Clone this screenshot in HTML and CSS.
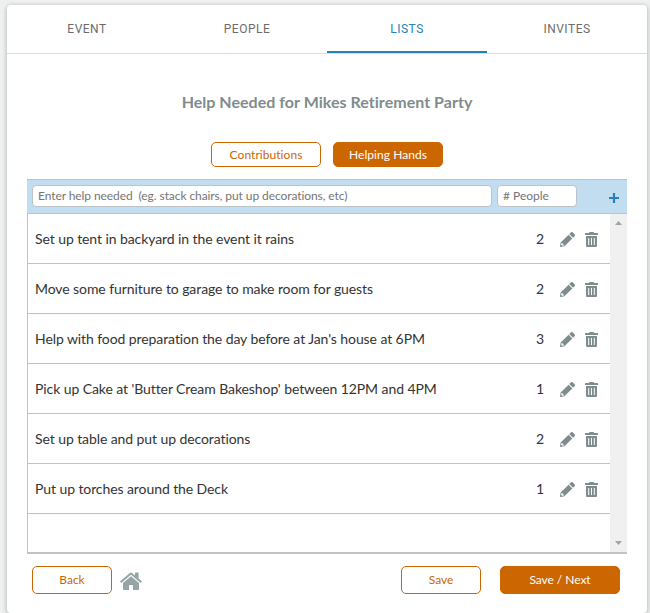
FILE: index.html
```html
<!DOCTYPE html>
<html lang="en">
<head>
<meta charset="utf-8">
<title>Help Needed</title>
<link rel="stylesheet" href="styles.css">
</head>
<body>
<svg class="sprite" aria-hidden="true">
  <symbol id="pencil" viewBox="0 0 512 512"><path d="M497.9 142.1l-46.1 46.1c-4.7 4.7-12.3 4.7-17 0l-111-111c-4.7-4.7-4.7-12.3 0-17l46.1-46.1c18.7-18.7 49.1-18.7 67.9 0l60.1 60.1c18.8 18.7 18.8 49.1 0 67.9zM284.2 99.8L21.6 362.4.4 483.9c-2.9 16.4 11.4 30.6 27.8 27.8l121.5-21.3 262.6-262.6c4.7-4.7 4.7-12.3 0-17l-111-111c-4.8-4.7-12.4-4.7-17.1 0zM88 424h48v36.3l-64.5 11.3-31.1-31.1L51.8 376H88v48z"/></symbol>
  <symbol id="trash" viewBox="0 0 13 15"><path fill-rule="evenodd" d="M0 1.4Q0 1 .4 1H4L4.5 0h4L9 1h3.6q.4 0 .4.4V3H0zM1 4h11v9.8q0 1.2-1.2 1.2H2.2Q1 15 1 13.8zM3.2 6v7h1V6zM6 6v7h1V6zM8.8 6v7h1V6z"/></symbol>
  <symbol id="home" viewBox="0 0 22 18"><path d="M11 4.3 3 11v6.2q0 .8.8.8H9v-4.5q0-.5.5-.5h3q.5 0 .5.5V18h5.2q.8 0 .8-.8V11z"/><path d="M.2 9.2 9.9.9q1.1-.9 2.2 0L15 3.4V1q0-.5.5-.5h2.6q.5 0 .5.5v5.4l3.2 2.8q.3.3.1.6l-.8.9q-.3.3-.7 0L11 2.8 1.6 10.7q-.4.3-.7 0l-.8-.9q-.2-.3.1-.6z"/></symbol>
</svg>
<main class="card">
  <nav class="tabs">
    <a class="tab">EVENT</a>
    <a class="tab">PEOPLE</a>
    <a class="tab active">LISTS</a>
    <a class="tab">INVITES</a>
  </nav>
  <h1 class="title">Help Needed for Mikes Retirement Party</h1>
  <div class="switch">
    <button class="btn">Contributions</button>
    <button class="btn solid">Helping Hands</button>
  </div>
  <section class="panel">
    <div class="entry">
      <input class="field help" placeholder="Enter help needed &nbsp;(eg. stack chairs, put up decorations, etc)">
      <input class="field count" placeholder="# People">
      <svg class="plus" viewBox="0 0 10 10"><path d="M3.9 0h2.200v3.900H10v2.200H6.100V10H3.900V6.100H0V3.900h3.900z"/></svg>
    </div>
    <div class="list">
      <ul class="rows">
        <li class="row"><span class="name">Set up tent in backyard in the event it rains</span><span class="num">2</span><svg class="pencil"><use href="#pencil"/></svg><svg class="trash"><use href="#trash"/></svg></li>
        <li class="row"><span class="name">Move some furniture to garage to make room for guests</span><span class="num">2</span><svg class="pencil"><use href="#pencil"/></svg><svg class="trash"><use href="#trash"/></svg></li>
        <li class="row"><span class="name">Help with food preparation the day before at Jan's house at 6PM</span><span class="num">3</span><svg class="pencil"><use href="#pencil"/></svg><svg class="trash"><use href="#trash"/></svg></li>
        <li class="row"><span class="name">Pick up Cake at 'Butter Cream Bakeshop' between 12PM and 4PM</span><span class="num">1</span><svg class="pencil"><use href="#pencil"/></svg><svg class="trash"><use href="#trash"/></svg></li>
        <li class="row"><span class="name">Set up table and put up decorations</span><span class="num">2</span><svg class="pencil"><use href="#pencil"/></svg><svg class="trash"><use href="#trash"/></svg></li>
        <li class="row"><span class="name">Put up torches around the Deck</span><span class="num">1</span><svg class="pencil"><use href="#pencil"/></svg><svg class="trash"><use href="#trash"/></svg></li>
      </ul>
      <div class="scrollbar">
        <svg class="arrow" viewBox="0 0 7 4"><path d="M3.5 0 7 4H0z"/></svg>
        <svg class="arrow" viewBox="0 0 7 4"><path d="M0 0h7L3.500 4z"/></svg>
      </div>
    </div>
  </section>
  <footer class="actions">
    <button class="btn small">Back</button>
    <svg class="home"><use href="#home"/></svg>
    <button class="btn small save">Save</button>
    <button class="btn solid next">Save / Next</button>
  </footer>
</main>
</body>
</html>
```
FILE: styles.css
```css
* { box-sizing: border-box; }
body {
  margin: 0;
  height: 613px;
  padding: 5px 3px 0 7px;
  overflow: hidden;
  background: #eff1f1;
  font-family: Lato, sans-serif;
}
.sprite { display: none; }
svg { display: block; flex: none; fill: #7f8c8d; }
.card {
  width: 640px;
  height: 608px;
  background: #fff;
  border-radius: 4px;
  box-shadow: 0 1px 5px rgba(0, 0, 0, .3);
}
.tabs {
  display: flex;
  height: 49px;
  border-bottom: 1px solid #dadddd;
}
.tab {
  flex: 1;
  height: 48px;
  text-align: center;
  font: 400 12px/48px Roboto, sans-serif;
  letter-spacing: .5px;
  color: #6c6c6c;
}
.tab.active { color: #2980b9; border-bottom: 2px solid #2980b9; }
.title {
  margin: 38px 0 0;
  font-size: 16px;
  line-height: 20px;
  font-weight: 700;
  letter-spacing: .03px;
  text-align: center;
  color: #7f8c8d;
}
.switch {
  display: flex;
  justify-content: center;
  gap: 12px;
  margin-top: 30px;
}
.btn {
  width: 110px;
  height: 25px;
  padding: 0;
  border: 1px solid #cc6600;
  border-radius: 5px;
  background: #fff;
  color: #cc6600;
  font: 400 12px/15px Lato, sans-serif;
  letter-spacing: .05px;
}
.btn.solid { background: #cc6600; color: #fff; }
.panel { width: 600px; margin: 12px 0 0 20px; }
.entry {
  display: flex;
  align-items: flex-start;
  height: 35px;
  padding: 5px 8px 0 5px;
  border: solid #bdc3c7;
  border-width: 1px 0;
  background: #c1ddef;
}
.field {
  height: 22px;
  padding: 0 5px 2px;
  border: 1px solid #bdc3c7;
  border-radius: 4px;
  background: #fff;
  font: 400 12px/16px Lato, sans-serif;
  letter-spacing: -.08px;
  color: #444;
}
.field::placeholder { color: #757575; opacity: 1; }
.help { width: 460px; margin-right: 5px; }
.count { width: 80px; letter-spacing: 0; }
.plus { width: 10px; height: 10px; margin: 8px 0 0 auto; fill: #2980b9; }
.list {
  display: flex;
  height: 340px;
  border-left: 1px solid #bdc3c7;
  border-bottom: 2px solid #bdc3c7;
}
.rows { flex: 1; margin: 0; padding: 0; list-style: none; }
.row {
  display: flex;
  align-items: center;
  height: 50px;
  padding: 1px 12px 0 7px;
  border-bottom: 1px solid #bdc3c7;
  font-size: 14px;
  color: #333;
}
.name { flex: 1; padding-bottom: 2px; letter-spacing: -.085px; }
.num { width: 8px; margin-right: 16px; padding-bottom: 2px; text-align: center; }
.pencil { width: 15px; height: 15px; margin: 1px 10px 0 0; }
.trash { width: 13px; height: 15px; margin-top: 1px; }
.scrollbar {
  display: flex;
  flex-direction: column;
  justify-content: space-between;
  align-items: center;
  width: 17px;
  padding: 7px 0;
  background: #f0f0f0;
}
.arrow { width: 7px; height: 4px; fill: #a3a3a3; }
.actions {
  display: flex;
  align-items: center;
  margin: 12px 27px 0 25px;
}
.actions .btn { height: 28px; padding-bottom: 1px; letter-spacing: -.05px; }
.actions .small { width: 80px; }
.home { width: 22px; height: 18px; margin: 2px 0 0 8px; fill: #95a5a6; }
.actions .save { margin: 0 19px 0 auto; }
.actions .next { width: 120px; }
```
